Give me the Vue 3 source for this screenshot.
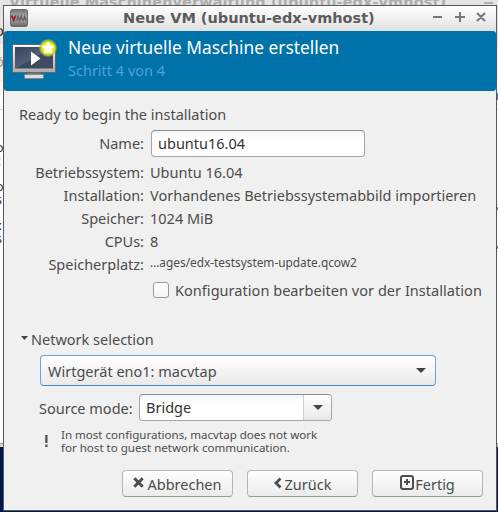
<script setup>
import { ref } from 'vue'

const name = ref('ubuntu16.04')
const customize = ref(false)
const details = [
  { label: 'Betriebssystem:', value: 'Ubuntu 16.04' },
  { label: 'Installation:', value: 'Vorhandenes Betriebssystemabbild importieren' },
  { label: 'Speicher:', value: '1024 MiB' },
  { label: 'CPUs:', value: '8' },
  { label: 'Speicherplatz:', value: '…ages/edx-testsystem-update.qcow2', small: true },
]
</script>

<template>
  <div class="desktop">
    <div class="behind">
      <div class="behind-title"><span>Virtuelle Maschinenverwaltung (ubuntu-edx-vmhost)</span></div>
      <div class="behind-menu">o</div>
      <div class="behind-toolbar">ö</div>
      <div class="behind-head"></div>
      <div class="behind-list">
        <span class="entry e1">o<br>t</span>
        <span class="entry e2">o<br>s</span>
        <span class="entry e3"><b>t</b><br>s</span>
      </div>
      <div class="behind-foot"></div>
      <i class="behind-min"></i>
      <i class="spark s0"></i><i class="spark s1"></i><i class="spark s2"></i>
    </div>

    <section class="window">
      <header class="titlebar">
        <svg class="appicon" width="18" height="18" viewBox="0 0 18 18">
          <defs>
            <linearGradient id="badge-metal" x1="0" y1="0" x2="0" y2="1">
              <stop offset="0" stop-color="#777" /><stop offset=".45" stop-color="#aaa" />
              <stop offset=".75" stop-color="#8b8b8b" /><stop offset="1" stop-color="#636363" />
            </linearGradient>
          </defs>
          <rect x=".5" y=".5" width="17" height="17" rx="2" fill="url(#badge-metal)" stroke="#696969" />
          <path d="M1.500 6.500l2.200 4.500 2-4.500" fill="none" stroke="#a3162b" stroke-width="1.800" />
          <path d="M6.500 11.500l1.600-4.500 1.600 4.500 1.600-4.500 1.400 4.500M13.500 11.500l1-4 1.700 4" fill="none" stroke="#5c5c5c" stroke-width="1.200" />
        </svg>
        <h1>Neue VM (ubuntu-edx-vmhost)</h1>
        <svg class="controls" width="54" height="12" viewBox="0 0 54 12">
          <path d="M1 6h9M23 6h10M28 1v10M45 2l8 8M53 2l-8 8" fill="none" stroke="#777" stroke-width="2" />
        </svg>
      </header>

      <div class="banner">
        <svg width="46" height="42" viewBox="0 0 46 42">
          <defs>
            <linearGradient id="frame" x1="0" y1="0" x2="0" y2="1">
              <stop offset="0" stop-color="#fafafa" /><stop offset="1" stop-color="#aaa" />
            </linearGradient>
            <linearGradient id="screen" x1="0" y1="0" x2="1" y2="1">
              <stop offset="0" stop-color="#334258" /><stop offset=".5" stop-color="#526177" /><stop offset=".51" stop-color="#3b4960" /><stop offset="1" stop-color="#414f66" />
            </linearGradient>
            <radialGradient id="glow">
              <stop offset="0" stop-color="#fffb60" /><stop offset=".6" stop-color="#e9ed22" />
              <stop offset=".8" stop-color="#b9cc27" stop-opacity=".8" /><stop offset="1" stop-color="#7bb04a" stop-opacity="0" />
            </radialGradient>
          </defs>
          <path d="M15 32h14v4H15z" fill="#777" />
          <rect x="12.500" y="35.500" width="19" height="4" rx="1" fill="#ddd" stroke="#888" />
          <rect x=".5" y="5.500" width="43" height="28" rx="1" fill="url(#frame)" stroke="#666" />
          <rect x="3" y="8" width="38" height="21.500" fill="url(#screen)" />
          <path d="M19 12.500L28.500 19.500 19 26.500z" fill="#fff" />
          <circle cx="36" cy="9" r="9.500" fill="url(#glow)" />
          <path d="M36 3.200l1.700 3.700 4 .6-3 2.800.8 4-3.500-2-3.500 2 .8-4-3-2.800 4-.6z" fill="#fff" stroke="#fff" stroke-linejoin="round" />
        </svg>
        <div class="heading">
          <h2>Neue virtuelle Maschine erstellen</h2>
          <p>Schritt 4 von 4</p>
        </div>
      </div>

      <main>
        <p class="intro">Ready to begin the installation</p>
        <div class="details">
          <label class="tall" for="name">Name:</label>
          <div class="tall"><input id="name" v-model="name" class="entrybox"></div>
          <template v-for="row in details" :key="row.label">
            <span>{{ row.label }}</span>
            <span :class="{ path: row.small }">{{ row.value }}</span>
          </template>
        </div>
        <label class="check">
          <input v-model="customize" type="checkbox">
          <span>Konfiguration bearbeiten vor der Installation</span>
        </label>

        <div class="expander">
          <svg width="7" height="4" viewBox="0 0 7 4"><path d="M0 0h7L3.500 4z" fill="#444" /></svg>
          <span>Network selection</span>
        </div>
        <div class="combo">
          <span>Wirtgerät eno1: macvtap</span>
          <svg width="10" height="5" viewBox="0 0 10 5"><path d="M0 0h10L5 5z" fill="#444" /></svg>
        </div>
        <div class="mode">
          <span>Source mode:</span>
          <div class="modebox">
            <span>Bridge</span>
            <div class="arrow"><svg width="10" height="5" viewBox="0 0 10 5"><path d="M0 0h10L5 5z" fill="#444" /></svg></div>
          </div>
        </div>
        <div class="note">
          <svg width="3" height="12" viewBox="0 0 3 12"><path d="M.3 0h2.200v8H.3zM.3 9.500h2.200V12H.3z" fill="#4c4c4c" /></svg>
          <p>In most configurations, macvtap does not work<br>for host to guest network communication.</p>
        </div>

        <footer>
          <button>
            <svg width="11" height="11" viewBox="0 0 11 11"><path d="M1.300 1.300l8.400 8.400M9.700 1.300L1.300 9.700" fill="none" stroke="#4d4d4d" stroke-width="3" /></svg>
            <span class="gap">Abbrechen</span>
          </button>
          <button>
            <svg width="8" height="12" viewBox="0 0 8 12"><path d="M6.500 1.500L2 6l4.500 4.500" fill="none" stroke="#4d4d4d" stroke-width="2.800" /></svg>
            <span class="gap">Zurück</span>
          </button>
          <button>
            <svg width="14" height="15" viewBox="0 0 14 15"><rect x="1" y="1" width="12" height="13" rx="2" fill="none" stroke="#4d4d4d" stroke-width="2" /><path d="M4 7h6M7 4v6" stroke="#4d4d4d" stroke-width="2" /></svg>
            <span class="tight">Fertig</span>
          </button>
        </footer>
      </main>
    </section>
  </div>
</template>

<style>
body { margin: 0; }
</style>

<style scoped>
* { box-sizing: border-box; }
h1, h2, p { margin: 0; font-weight: normal; }
svg { display: block; flex: none; }
.desktop {
  position: relative;
  width: 498px;
  height: 512px;
  overflow: hidden;
  background: #00174b;
  font-family: "Noto Sans", sans-serif;
  font-size: 14.5px;
  color: #4c4c4c;
}
.behind { height: 447px; background: #fff; overflow: hidden; color: #333; }
.behind-title {
  display: flex;
  height: 23px;
  background: #e4e4e4;
  color: #adadad;
  font: bold 14.5px/17px "DejaVu Sans", sans-serif;
  letter-spacing: 0.07px;
  white-space: nowrap;
  padding-left: 9px;
}
.behind-title span { margin-top: -6px; }
.behind-menu { height: 21px; background: #e4e4e4; line-height: 15px; text-indent: -5px; }
.behind-toolbar { height: 38px; background: #f0f0f0; line-height: 34px; text-indent: -5px; color: #999; }
.behind-head { height: 28px; border-bottom: 1px solid #d5d5d5; }
.behind-list { position: relative; height: 333px; font-size: 12.5px; line-height: 13px; }
.entry { position: absolute; left: -4px; }
.e1 { top: 31px; }
.e2 { top: 70px; }
.e3 { top: 109px; }
.behind-foot { height: 4px; border-top: 1px solid #999; background: #d8d8d8; }
.behind-min { position: absolute; left: 484px; top: 2px; width: 9px; height: 2px; background: #adadad; }
.spark { position: absolute; left: 497px; width: 1px; height: 3px; background: #6689a8; }
.s0 { top: 93px; height: 7px; background: #3d78b8; }
.s1 { top: 207px; }
.s2 { top: 246px; }

.window {
  position: absolute;
  left: 3px;
  top: 5px;
  width: 494px;
  height: 506px;
  border: 1px solid #595959;
  background: #f0f0f0;
  display: flex;
  flex-direction: column;
}
.titlebar {
  height: 25px;
  display: flex;
  align-items: center;
  padding: 0 10px 0 6px;
  background: linear-gradient(#fff, #e0e0e0);
}
.titlebar h1 {
  flex: 1;
  margin-top: -1px;
  padding-left: 95px;
  font: bold 14.5px/18px "DejaVu Sans", sans-serif;
  color: #5c5c5c;
  white-space: nowrap;
}
.appicon { margin-top: -1px; }
.controls { margin-top: -3px; }
.banner {
  height: 60px;
  display: flex;
  padding: 8px 0 0 8px;
  gap: 10px;
  border-radius: 3px;
  background: #0072aa;
  color: #fff;
}
.heading { display: flex; flex-direction: column; }
h2 { font-size: 17.33px; line-height: 24px; margin-top: -4px; }
.heading p { line-height: 22px; color: #4ba3dc; }
main { flex: 1; padding: 12px 12px 0 15px; white-space: nowrap; }
.intro { line-height: 22px; }
.details {
  display: grid;
  grid-template-columns: 125px 1fr;
  column-gap: 6px;
  grid-template-rows: 36px;
  grid-auto-rows: 23px;
  line-height: 23px;
}
.details > :nth-child(odd) { text-align: right; }
.tall { line-height: 36px; display: block; }
.entrybox {
  display: block;
  width: 214px;
  height: 27px;
  margin: 5px 0 0 1px;
  padding: 0 6px 2px;
  border: 1px solid #a6a6a6;
  border-top-color: #8c8c8c;
  border-radius: 4px;
  background: linear-gradient(#f5f5f5, #fff 30%);
  font: inherit;
  line-height: 23px;
  color: #333;
  outline: none;
}
.path { font-size: 11.85px; line-height: 19px; }
.check { display: flex; align-items: center; height: 22px; margin: 3px 0 0 134px; gap: 6px; letter-spacing: 0.04px; }
.check span { margin-top: -1px; }
.check input {
  appearance: none;
  width: 16px;
  height: 16px;
  margin: 0;
  border: 1px solid #999;
  border-radius: 3px;
  background: linear-gradient(#fff, #f4f4f4);
}
.expander { display: flex; align-items: center; gap: 3px; height: 22px; margin: 27px 0 0 2px; }
.expander svg { margin-top: -2px; }
.combo {
  display: flex;
  align-items: center;
  justify-content: space-between;
  width: 396px;
  height: 31px;
  margin: 5px 0 0 21px;
  padding: 0 9px 0 7px;
  border: 1px solid #6ea3d8;
  border-bottom-color: #4a87c8;
  border-radius: 4px;
  background: linear-gradient(#fff, #e9e9e9);
}
.mode { display: flex; align-items: center; height: 27px; margin: 8px 0 0 20px; gap: 7px; }
.mode > span { width: 93px; }
.modebox {
  display: flex;
  width: 193px;
  height: 27px;
  border: 1px solid #a6a6a6;
  border-top-color: #8c8c8c;
  border-radius: 4px;
  background: linear-gradient(#f5f5f5, #fff 30%);
  line-height: 25px;
  color: #333;
}
.modebox > span { flex: 1; padding-left: 6px; }
.arrow {
  width: 28px;
  display: flex;
  align-items: center;
  justify-content: center;
  border-left: 1px solid #ccc;
  border-radius: 0 3px 3px 0;
  background: linear-gradient(#fff, #e9e9e9);
}
.note { display: flex; align-items: center; gap: 13px; margin: 7px 0 0 26px; font-size: 11.55px; line-height: 13px; }
footer { display: grid; grid-template-columns: repeat(3, 111px); gap: 14px; margin: 16px 0 0 103px; }
button {
  display: flex;
  align-items: center;
  justify-content: center;
  height: 27px;
  padding: 0;
  border: 1px solid #b5b5b5;
  border-bottom-color: #999;
  border-radius: 4px;
  background: linear-gradient(#fff, #ebebeb);
  font: inherit;
  color: #4c4c4c;
}
button svg { margin-top: -2px; }
.gap { margin-left: 3px; }
.tight { margin-left: 1px; }
</style>
